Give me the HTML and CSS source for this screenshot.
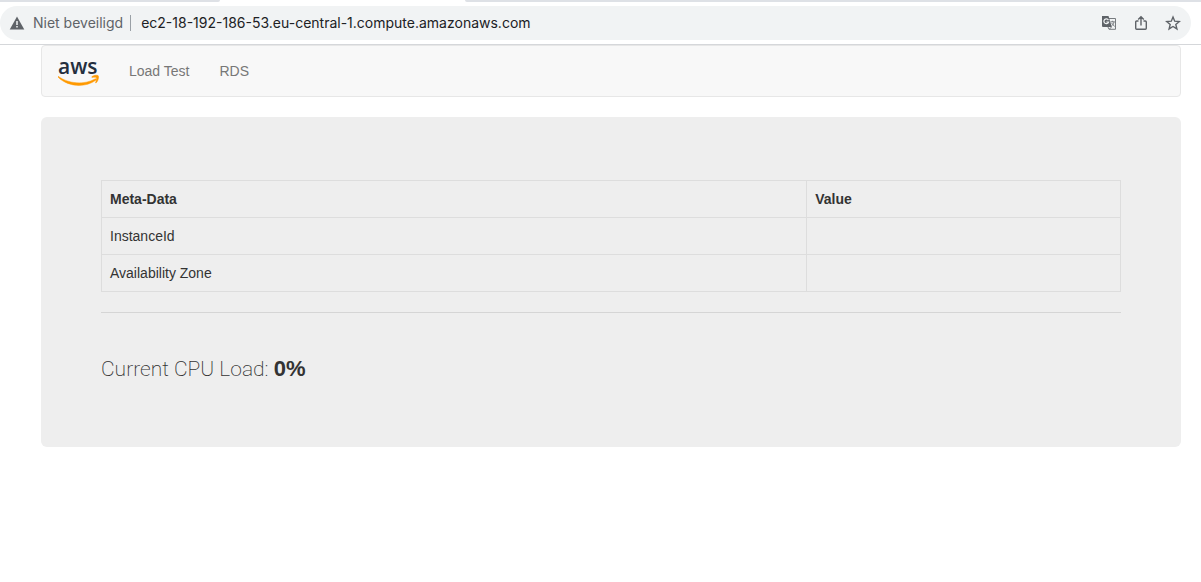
FILE: index.html
```html
<!DOCTYPE html>
<html lang="en">
<head>
<meta charset="utf-8">
<title>Load Test</title>
<link rel="stylesheet" href="styles.css">
</head>
<body>
<header class="browser">
  <div class="tabs"><span class="tab-before"></span><span class="tab-active"></span><span class="tab-after"></span></div>
  <div class="address">
    <button class="security" type="button">
      <svg width="16" height="16" viewBox="0 0 16 16" aria-hidden="true"><path d="M8 1.500 15.300 14.500H.7Z" fill="#5f6368"/><path d="M8 6v4M8 11v1.600" stroke="#f1f3f4" stroke-width="1.500"/></svg>
      <span>Niet beveiligd</span>
    </button>
    <input class="url" type="text" aria-label="Address" value="ec2-18-192-186-53.eu-central-1.compute.amazonaws.com">
    <div class="actions">
      <button type="button" aria-label="Translate"><svg width="16" height="16" viewBox="0 0 16 16"><path d="M6 3.500h8.500v10.800H8L6.500 11" fill="#f1f3f4" stroke="#777b7f"/><path d="M1 1h6.500l3.300 11H2a1 1 0 0 1-1-1Z" fill="#5f6368"/><path d="M7.400 5.100A2.400 2.400 0 1 0 7.600 7H5.300" fill="none" stroke="#f1f3f4" stroke-width="1.200"/><path d="M9.500 6.800h4.300M11.600 5.800v1M13 7c-.3 2-1.500 3.300-2.500 4M10.600 8l3 3.500M8.500 14l2-2" fill="none" stroke="#777b7f"/></svg></button>
      <button type="button" aria-label="Share"><svg width="16" height="16" viewBox="0 0 16 16" fill="none" stroke="#5f6368" stroke-width="1.400"><path d="M5.500 6H3.700a1 1 0 0 0-1 1v6.300a1 1 0 0 0 1 1h8.600a1 1 0 0 0 1-1V7a1 1 0 0 0-1-1h-1.800M8 10.500V2M5.200 4.500 8 1.700l2.800 2.800"/></svg></button>
      <button type="button" aria-label="Bookmark"><svg width="16" height="16" viewBox="0 0 16 16" fill="none" stroke="#5f6368" stroke-width="1.400"><path d="m8 2 1.700 4.200 4.600.3-3.500 3 1.100 4.400L8 11.500l-3.900 2.400 1.100-4.400-3.500-3 4.600-.3Z"/></svg></button>
    </div>
  </div>
</header>
<div class="container">
  <nav class="navbar">
    <a class="brand" href="#" aria-label="AWS home">
      <svg width="42" height="40" viewBox="0 0 42 40"><text class="logo-text" x="0" y="23">aws</text><g transform="translate(0 7)" fill="#f90" stroke="#f90" stroke-width=".5"><path d="M.5 18.500c10 7.500 26 8.500 36.500 2.500 1-.5 1.700.5.800 1.200C27 30 10 29 .2 19.200c-.4-.5-.2-1 .3-.7Z"/><path d="M34 18.600c2-1.500 5.300-1.700 6.200-.9 1 .9-.1 5.500-2 7.100-.4.400-.8.200-.6-.3.600-1.500 1.300-4.100.8-4.800-.6-.7-2.800-.5-4.200-.3-.6.100-.6-.5-.2-.8Z"/></g></svg>
    </a>
    <a class="nav-link" href="#">Load Test</a>
    <a class="nav-link" href="#">RDS</a>
  </nav>
  <main class="panel">
    <table class="metadata">
      <thead><tr><th class="key" scope="col">Meta-Data</th><th scope="col">Value</th></tr></thead>
      <tbody><tr><td>InstanceId</td><td></td></tr><tr><td>Availability Zone</td><td></td></tr></tbody>
    </table>
    <hr>
    <p class="load">Current CPU Load: <strong>0%</strong></p>
  </main>
</div>
</body>
</html>
```
FILE: styles.css
```css
* { box-sizing: border-box; }
body { margin: 0; background: #fff; color: #333; font: 14px/20px "Liberation Sans", Arial, sans-serif; }
button { border: 0; padding: 0; background: none; font: inherit; color: inherit; }
svg { display: block; }
.browser { border-bottom: 1px solid #d5d7da; font-family: Inter, sans-serif; }
.tabs { display: flex; height: 2px; margin-bottom: 4px; }
.tab-before { width: 220px; background: #dee1e6; border-bottom-right-radius: 2px; }
.tab-active { width: 245px; }
.tab-after { flex: 1; background: #dee1e6; border-bottom-left-radius: 2px; }
.address { display: flex; align-items: center; height: 34px; margin: 0 10px 4px 0; padding: 0 10px 0 9px; border-radius: 17px; background: #f1f3f4; }
.security { display: flex; align-items: center; gap: 8px; height: 16px; padding-right: 7px; border-right: 1px solid #9aa0a6; color: #5f6368; white-space: nowrap; }
.url { flex: 1; min-width: 0; margin-left: 10px; padding: 0; border: 0; outline: 0; background: none; color: #202124; font: inherit; }
.actions { display: flex; gap: 16px; }
.container { margin: 0 20px 0 41px; }
.navbar { display: flex; align-items: center; height: 52px; margin-bottom: 20px; padding-left: 16px; border: 1px solid #e7e7e7; border-radius: 4px; background: #f8f8f8; }
.brand { margin-right: 14px; }
.logo-text { font: 600 21px "Open Sans", sans-serif; fill: #252f3e; }
.nav-link { padding: 15px; color: #777; text-decoration: none; }
.panel { padding: 63px 60px; border-radius: 6px; background: #eee; }
.metadata { width: 100%; border-collapse: collapse; table-layout: fixed; }
.metadata th, .metadata td { height: 37px; padding: 8px; border: 1px solid #ddd; text-align: left; }
.metadata .key { width: 69.2%; }
hr { margin: 20px 0 41px; border: 0; border-top: 1px solid #d5d5d5; }
.load { margin: 0; font: 200 21px/29px Roboto, sans-serif; }
.load strong { font: bold 22px/29px "Liberation Sans", Arial, sans-serif; }
```
